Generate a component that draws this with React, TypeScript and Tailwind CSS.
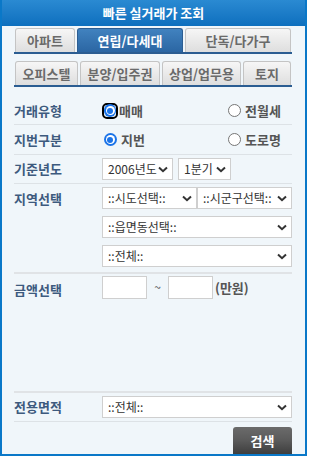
import React from 'react';

const font = { fontFamily: '"Noto Sans CJK KR", "Noto Sans", sans-serif' };

function Chevron() {
  return (
    <svg width="10" height="7" viewBox="0 0 10 7" className="shrink-0">
      <path d="M1 1.5 L5 5.2 L9 1.5" stroke="#333" strokeWidth="2" fill="none" />
    </svg>
  );
}

function Select({ label, className }: { label: string; className: string }) {
  return (
    <div className={`h-[22px] bg-white border border-[#cfcfcf] flex items-center justify-between pl-[5px] pr-[4px] text-[12px] text-[#333] ${className}`}>
      <span className="whitespace-nowrap overflow-hidden">{label}</span>
      <Chevron />
    </div>
  );
}

function Radio({ checked, focus }: { checked?: boolean; focus?: boolean }) {
  return (
    <span className={`w-[16px] h-[16px] flex items-center justify-center rounded-[5px] ${focus ? 'border-2 border-black' : ''}`}>
      {checked ? (
        <span className="w-[13px] h-[13px] rounded-full bg-[#1a73e8] flex items-center justify-center">
          <span className="w-[9px] h-[9px] rounded-full bg-white flex items-center justify-center">
            <span className="w-[6px] h-[6px] rounded-full bg-[#1a73e8]" />
          </span>
        </span>
      ) : (
        <span className="w-[13px] h-[13px] rounded-full bg-white border border-[#767676]" />
      )}
    </span>
  );
}

const tabs1 = [
  { t: '아파트', w: 'w-[60px]' },
  { t: '연립/다세대', w: 'w-[106px]', on: true },
  { t: '단독/다가구', w: 'w-[106px]' },
];
const tabs2 = [
  { t: '오피스텔', w: 'w-[63px]' },
  { t: '분양/입주권', w: 'w-[80px]' },
  { t: '상업/업무용', w: 'w-[79px]' },
  { t: '토지', w: 'w-[48px]' },
];

function Tabs({ items }: { items: { t: string; w: string; on?: boolean }[] }) {
  return (
    <div className="flex gap-[2px] border-b-2 border-[#2b5d92] pl-[1px]">
      {items.map((i) => (
        <div
          key={i.t}
          className={`${i.w} h-[24px] rounded-t-[3px] flex items-center justify-center text-[13px] font-bold border border-b-0 ${
            i.on
              ? 'bg-gradient-to-b from-[#4182bf] to-[#2b66a3] text-white border-[#2b5d92]'
              : 'bg-gradient-to-b from-[#f6f6f6] to-[#dedede] text-[#6a6a6a] border-[#c4c4c4]'
          }`}
        >
          {i.t}
        </div>
      ))}
    </div>
  );
}

const labelCls = 'w-[88px] shrink-0 text-[13px] font-bold text-[#3d5a7e]';

export default function App() {
  return (
    <div className="w-[309px] h-[456px] bg-white" style={font}>
      <div className="w-[307px] h-[456px] border-x-2 border-b-2 border-[#0a78c8] bg-[#f0f6fa] flex flex-col">
        <div className="h-[26px] bg-gradient-to-b from-[#2a8ad2] to-[#0c6fbe] text-white font-bold text-[13px] flex items-center justify-center">
          빠른 실거래가 조회
        </div>
        <div className="pl-[12px] pr-[13px] flex flex-col">
          <div className="pt-[2px]">
            <Tabs items={tabs1} />
          </div>
          <div className="pt-[7px]">
            <Tabs items={tabs2} />
          </div>

          <div className="flex items-center h-[38px] pt-[10px] border-b border-[#dde2e6]">
            <span className={labelCls}>거래유형</span>
            <div className="flex items-center gap-[1px] w-[124px]">
              <Radio checked focus />
              <span className="text-[13px] font-bold text-[#555]">매매</span>
            </div>
            <div className="flex items-center gap-[3px]">
              <Radio />
              <span className="text-[13px] font-bold text-[#555]">전월세</span>
            </div>
          </div>

          <div className="flex items-center h-[30px] border-b border-[#dde2e6]">
            <span className={labelCls}>지번구분</span>
            <div className="flex items-center gap-[3px] w-[124px]">
              <Radio checked />
              <span className="text-[13px] font-bold text-[#555]">지번</span>
            </div>
            <div className="flex items-center gap-[3px]">
              <Radio />
              <span className="text-[13px] font-bold text-[#555]">도로명</span>
            </div>
          </div>

          <div className="flex items-center h-[29px] border-b border-[#dde2e6]">
            <span className={labelCls}>기준년도</span>
            <Select label="2006년도" className="w-[71px]" />
            <Select label="1분기" className="w-[53px] ml-[5px]" />
          </div>

          <div className="flex pt-[3px] pb-[5px] border-b-2 border-[#e0e3e6]">
            <span className={`${labelCls} pt-[2px]`}>지역선택</span>
            <div className="flex flex-col gap-[7px] flex-1">
              <div className="flex">
                <Select label="::시도선택::" className="w-[95px]" />
                <Select label="::시군구선택::" className="w-[95px]" />
              </div>
              <Select label="::읍면동선택::" className="w-full" />
              <Select label="::전체::" className="w-full" />
            </div>
          </div>

          <div className="flex items-start h-[119px] pt-[2px] border-b-2 border-[#e0e3e6]">
            <span className={`${labelCls} pt-[4px]`}>금액선택</span>
            <div className="w-[45px] h-[23px] bg-white border border-[#cfcfcf]" />
            <span className="w-[21px] text-center text-[12px] text-[#555] pt-[2px]">~</span>
            <div className="w-[45px] h-[23px] bg-white border border-[#cfcfcf]" />
            <span className="text-[13px] font-bold text-[#555] pt-[2px] ml-[2px]">(만원)</span>
          </div>

          <div className="flex items-center h-[29px] border-b border-[#dde2e6]">
            <span className={labelCls}>전용면적</span>
            <Select label="::전체::" className="flex-1" />
          </div>

          <div className="flex justify-end pt-[5px]">
            <div className="w-[59px] h-[27px] rounded-t-[3px] bg-gradient-to-b from-[#6b6b6b] via-[#5a5a5a] to-[#3e3e3e] text-white font-bold text-[13px] flex items-center justify-center">
              검색
            </div>
          </div>
        </div>
      </div>
    </div>
  );
}
